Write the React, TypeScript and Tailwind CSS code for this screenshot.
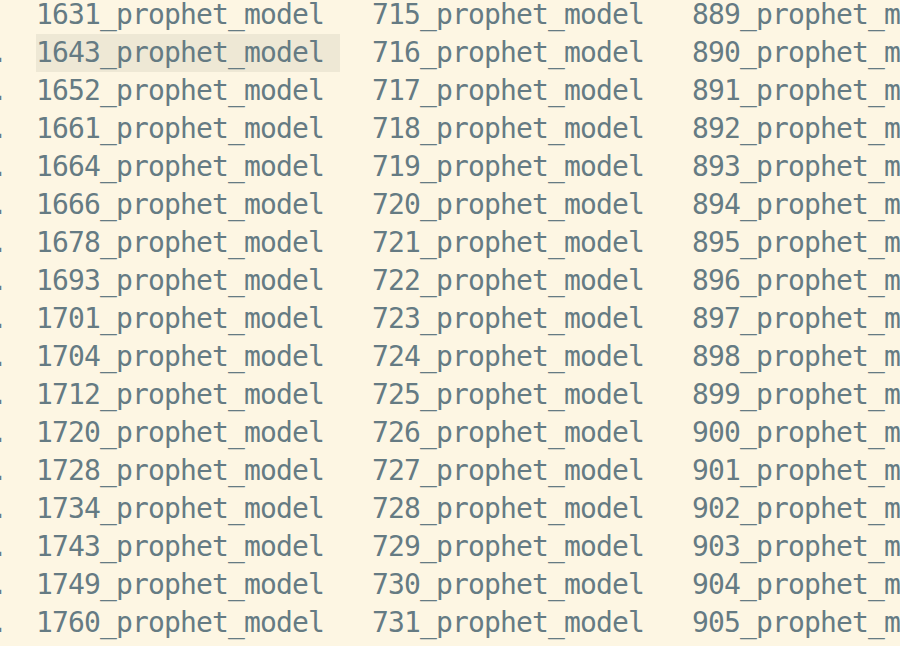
import React from "react";

const col1 = [
  "1631", "1643", "1652", "1661", "1664", "1666", "1678", "1693", "1701",
  "1704", "1712", "1720", "1728", "1734", "1743", "1749", "1760",
];
const col2 = Array.from({ length: 17 }, (_, i) => String(715 + i));
const col3 = Array.from({ length: 17 }, (_, i) => String(889 + i));

function Cell({ name, active }: { name: string; active?: boolean }) {
  return (
    <div className={active ? "h-[38px] w-[304px] bg-[#eee8d5]" : "h-[38px]"}>
      {name}_prophet_model
    </div>
  );
}

export default function App() {
  return (
    <div
      className="w-[900px] h-[646px] overflow-hidden bg-[#fdf6e3] text-[#657b83] text-[28px] leading-[38px] tracking-[-0.86px] whitespace-nowrap"
      style={{ fontFamily: '"DejaVu Sans Mono", "Liberation Mono", monospace' }}
    >
      <div className="flex -mt-[4px]">
        {/* tail of the previous column */}
        <div className="w-[36px] flex-none overflow-hidden">
          {col1.map((n, i) => (
            <div key={n} className="h-[38px] -ml-[9px]">
              {i === 0 ? "\u00a0" : "."}
            </div>
          ))}
        </div>
        <div className="w-[336px] flex-none">
          {col1.map((n, i) => (
            <Cell key={n} name={n} active={i === 1} />
          ))}
        </div>
        <div className="w-[320px] flex-none">
          {col2.map((n) => (
            <Cell key={n} name={n} />
          ))}
        </div>
        <div className="flex-none">
          {col3.map((n) => (
            <Cell key={n} name={n} />
          ))}
        </div>
      </div>
    </div>
  );
}
